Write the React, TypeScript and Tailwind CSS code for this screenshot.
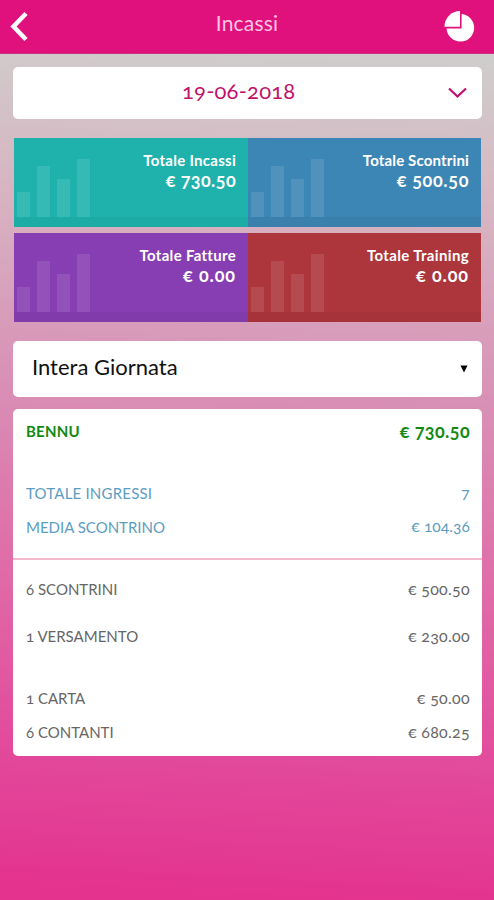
import React from "react";

type Tile = { label: string; value: string; color: string; labelTracking: string; valueTracking: string; pad: string };

const tiles: Tile[] = [
  { label: "Totale Incassi", value: "€ 730.50", color: "bg-[#1fb2ad]", labelTracking: "tracking-[0.28px]", valueTracking: "tracking-[0.4px]", pad: "pr-[12px]" },
  { label: "Totale Scontrini", value: "€ 500.50", color: "bg-[#3c86b5]", labelTracking: "tracking-[0.15px]", valueTracking: "tracking-[0.65px]", pad: "pr-[12px]" },
  { label: "Totale Fatture", value: "€ 0.00", color: "bg-[#873eb2]", labelTracking: "tracking-[0.3px]", valueTracking: "tracking-[0.9px]", pad: "pr-[12px]" },
  { label: "Totale Training", value: "€ 0.00", color: "bg-[#ad363c]", labelTracking: "tracking-[0.35px]", valueTracking: "tracking-[0.9px]", pad: "pr-[12px]" },
];

function Bars() {
  return (
    <div className="flex items-end gap-[7px] h-[59px]">
      <div className="w-[13px] h-[25px] bg-white/10" />
      <div className="w-[13px] h-[51px] bg-white/10" />
      <div className="w-[13px] h-[38px] bg-white/10" />
      <div className="w-[13px] h-[58px] bg-white/10" />
    </div>
  );
}

function TileCard({ tile }: { tile: Tile }) {
  return (
    <div className={`flex flex-col justify-between h-[89px] ${tile.color}`}>
      <div className={`flex justify-between pt-[12px] h-[79px] pl-[3px] ${tile.pad}`}>
        <div className="pt-[8px]"><Bars /></div>
        <div className="text-right text-white font-bold">
          <div className={`text-[15px] leading-[20px] ${tile.labelTracking}`}>{tile.label}</div>
          <div className={`text-[18px] leading-[21px] ${tile.valueTracking}`}>{tile.value}</div>
        </div>
      </div>
      <div className="h-[10px] bg-black/4" />
    </div>
  );
}

type RowProps = { label: string; value: string; className: string; valueClass?: string };

function Row({ label, value, className, valueClass = "text-[16px] tracking-[0.3px]" }: RowProps) {
  return (
    <div className={`flex justify-between items-center pl-[13px] pr-[12px] text-[15px] ${className}`}>
      <span>{label}</span>
      <span className={valueClass}>{value}</span>
    </div>
  );
}

export default function App() {
  return (
    <div className="w-[494px] h-[900px] overflow-hidden font-['Lato',sans-serif] oldstyle-nums bg-[linear-gradient(183deg,#cfcecc_6%,#d7b3c1_24%,#d893b7_42%,#df6fa9_62%,#e24c9c_82%,#e3338f_98%)]">
      <header className="h-[54px] bg-[#e0117d] flex items-center justify-between pl-[10px] pr-[18px] border-b border-[#c8327f]">
        <svg className="w-[19px] h-[32px]" viewBox="0 0 19 32" fill="none">
          <path d="M16 2.5L3.5 15.5L16 28.5" stroke="white" strokeWidth="4.5" />
        </svg>
        <h1 className="text-[21px] tracking-[0.2px] text-[#fcc4e2] pb-2 pl-[22px]">Incassi</h1>
        <svg className="w-[33px] h-[33px]" viewBox="0 0 33 33" fill="white">
          <path d="M18.6 4A13.8 13.8 0 1 1 3.6 18.5H18.6Z" />
          <path d="M17 1V16.8H1.5A15.5 15.5 0 0 1 17 1Z" />
        </svg>
      </header>
      <main className="pl-[13px] pr-[12px] pt-[13px]">
        <div className="h-[52px] rounded-[5px] bg-white flex items-center justify-between pl-[169px] pr-[15px]">
          <span className="text-[22px] tracking-[0.2px] pb-[5px] text-[#c0116c]">19-06-2018</span>
          <svg className="w-[19px] h-[12px]" viewBox="0 0 19 12" fill="none">
            <path d="M1 1.5L9.5 9.5L18 1.5" stroke="#c0116c" strokeWidth="2.3" />
          </svg>
        </div>
        <div className="mt-[19px] ml-px grid grid-cols-[234px_233px] gap-y-[6px]">
          {tiles.map((tile) => (
            <TileCard key={tile.label} tile={tile} />
          ))}
        </div>
        <div className="mt-[19px] h-[56px] rounded-[5px] bg-white flex items-center justify-between pl-[19px] pr-[14px]">
          <span className="text-[22px] pb-[5px] text-[#111]">Intera Giornata</span>
          <svg className="w-2 h-2" viewBox="0 0 8 8"><path d="M0.5 0.5H7.5L4 7.5Z" /></svg>
        </div>
        <div className="mt-3 h-[347px] rounded-[5px] bg-white">
          <Row label="BENNU" value="€ 730.50" className="h-[45px] font-bold text-[#128a12] tracking-[0.2px]" valueClass="text-[18px] tracking-[0.4px] pb-px" />
          <Row label="TOTALE INGRESSI" value="7" className="mt-[22px] h-[34px] text-[#5b9dbf] tracking-[0.2px]" />
          <Row label="MEDIA SCONTRINO" value="€ 104.36" className="h-[34px] text-[#5b9dbf]" valueClass="text-[15.5px] tracking-[0.1px]" />
          <div className="h-[2px] mt-[14px] bg-[#f6b9cc]" />
          <Row label="6 SCONTRINI" value="€ 500.50" className="mt-[12px] h-[34px] text-[#666]" />
          <Row label="1 VERSAMENTO" value="€ 230.00" className="mt-[13px] h-[34px] text-[#666]" />
          <Row label="1 CARTA" value="€ 50.00" className="mt-[28px] h-[34px] text-[#666]" />
          <Row label="6 CONTANTI" value="€ 680.25" className="h-[34px] text-[#666]" />
        </div>
      </main>
    </div>
  );
}
